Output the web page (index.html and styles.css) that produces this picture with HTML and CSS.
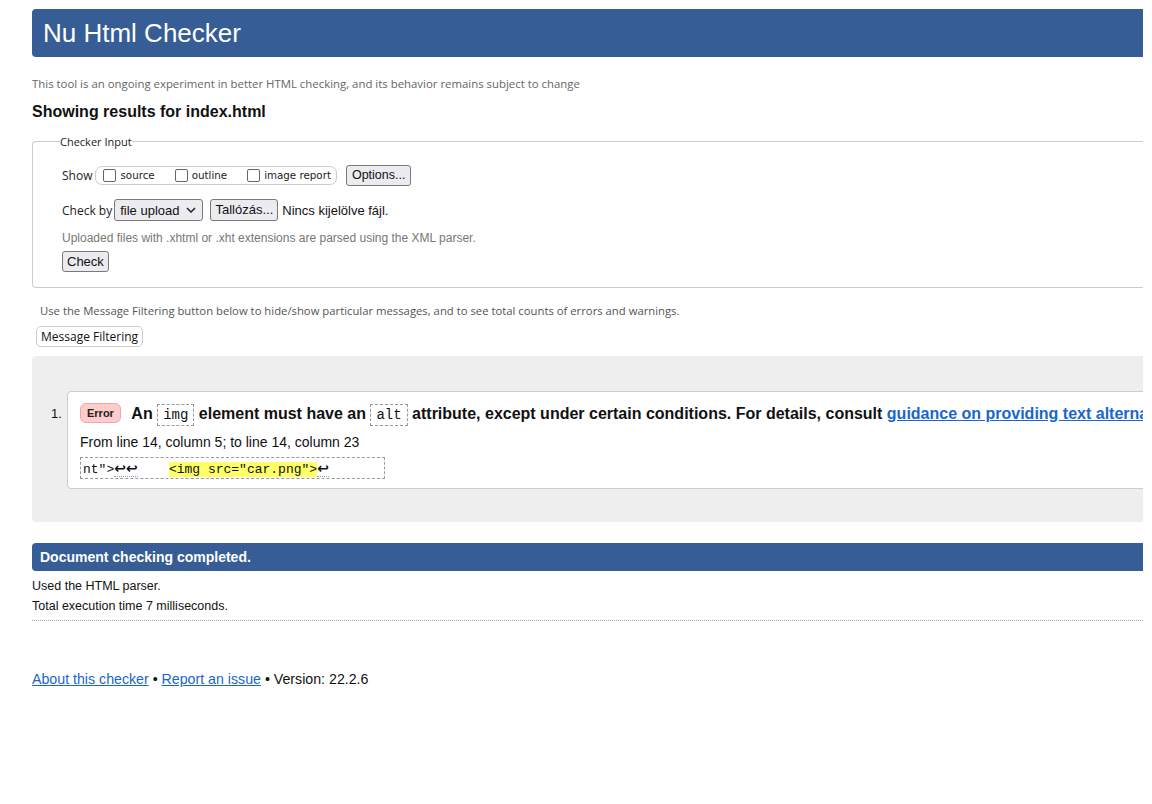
FILE: index.html
```html
<!DOCTYPE html>
<html lang="en">
<head>
<meta charset="utf-8">
<title>Showing results for index.html - Nu Html Checker</title>
<link rel="stylesheet" href="styles.css">
</head>
<body>
<div class="page">
  <h1 class="masthead">Nu Html Checker</h1>
  <p class="notice">This tool is an ongoing experiment in better HTML checking, and its behavior remains subject to change</p>
  <h2 class="results-title">Showing results for index.html</h2>

  <fieldset class="checker-input">
    <legend>Checker Input</legend>
    <div class="row show-row">
      <span class="lbl">Show</span>
      <span class="show-box">
        <label class="cb"><span class="box"></span>source</label>
        <label class="cb"><span class="box"></span>outline</label>
        <label class="cb"><span class="box"></span>image report</label>
      </span>
      <span class="btn">Options...</span>
    </div>
    <div class="row check-row">
      <span class="lbl">Check by</span>
      <span class="select">file upload
        <svg class="chev" width="10" height="6" viewBox="0 0 10 6"><path d="M1 1l4 4 4-4" fill="none" stroke="#222" stroke-width="1.5"/></svg>
      </span>
      <span class="btn">Tallózás...</span>
      <span class="nofile">Nincs kijelölve fájl.</span>
    </div>
    <p class="upload-note">Uploaded files with .xhtml or .xht extensions are parsed using the XML parser.</p>
    <span class="btn check-btn">Check</span>
  </fieldset>

  <p class="filter-note">Use the Message Filtering button below to hide/show particular messages, and to see total counts of errors and warnings.</p>
  <span class="filter-btn">Message Filtering</span>

  <div class="results">
    <ol class="messages">
      <li class="msg">
        <div class="msg-box">
          <p class="msg-text"><span class="badge">Error</span> <strong>An <code>img</code> element must have an <code>alt</code> attribute, except under certain conditions. For details, consult <a href="#">guidance on providing text alternatives for images</a>.</strong></p>
          <p class="location">From line 14, column 5; to line 14, column 23</p>
          <p class="extract"><code>nt"&gt;<span class="ret">↩↩</span>    <mark>&lt;img src="car.png"&gt;</mark><span class="ret">↩</span></code></p>
        </div>
      </li>
    </ol>
  </div>

  <h2 class="done">Document checking completed.</h2>
  <p class="details">Used the HTML parser.</p>
  <p class="details">Total execution time 7 milliseconds.</p>
  <hr class="sep">

  <p class="footer"><a href="#">About this checker</a> • <a href="#">Report an issue</a> • Version: 22.2.6</p>
</div>
</body>
</html>
```
FILE: styles.css
```css
html, body {
  margin: 0;
  padding: 0;
  background: #fff;
}
body {
  padding: 9px 9px 0 32px;
  font-family: "Liberation Sans", Arial, sans-serif;
  color: #111;
  overflow: hidden;
}
.page {
  width: 1111px;
  overflow: hidden;
}
.masthead {
  margin: 0;
  height: 48px;
  box-sizing: border-box;
  background: #365d95;
  color: #fff;
  font-weight: normal;
  font-size: 26px;
  line-height: 48px;
  padding-left: 11px;
  border-radius: 4px 0 0 4px;
}
.notice {
  margin: 19px 0 0;
  font-family: "Open Sans", sans-serif;
  font-size: 11.4px;
  line-height: 16px;
  color: #666;
}
.results-title {
  margin: 10px 0 0;
  font-size: 16px;
  line-height: 20px;
  font-weight: bold;
  color: #111;
}
.checker-input {
  margin: 12px 0 0;
  padding: 15px 0 15px 29px;
  border: 1px solid #ccc;
  border-right: none;
  border-radius: 4px 0 0 4px;
  min-width: 0;
}
.checker-input legend {
  font-family: "Open Sans", sans-serif;
  font-size: 11px;
  padding: 0;
  margin-left: -2px;
  color: #222;
}
.row {
  display: flex;
  align-items: center;
}
.lbl {
  font-family: "Open Sans", sans-serif;
  font-size: 12px;
  color: #222;
}
.show-row {
  height: 22px;
}
.show-box {
  display: inline-flex;
  align-items: center;
  height: 19px;
  margin-left: 3px;
  padding: 0 5px 0 7px;
  border: 1px solid #ccc;
  border-radius: 7px;
  box-sizing: border-box;
}
.cb {
  display: inline-flex;
  align-items: center;
  font-family: "DejaVu Sans", Verdana, sans-serif;
  font-size: 10.3px;
  color: #222;
  margin-right: 20px;
}
.cb:last-child { margin-right: 0; }
.box {
  width: 13px;
  height: 13px;
  border: 1px solid #666;
  border-radius: 2px;
  box-sizing: border-box;
  margin-right: 4px;
}
.btn {
  display: inline-block;
  font-family: "Liberation Sans", Arial, sans-serif;
  font-size: 12.5px;
  line-height: 19px;
  padding: 0 5px;
  background: #ebebf0;
  border: 1px solid #7a7a7a;
  border-radius: 3px;
  color: #111;
}
.show-row .btn { margin-left: 9px; }
.check-row {
  margin-top: 13px;
  height: 22px;
}
.select {
  display: inline-flex;
  align-items: center;
  margin-left: 2px;
  height: 22px;
  box-sizing: border-box;
  padding: 0 6px 0 5px;
  font-size: 13px;
  background: #ebebf0;
  border: 1px solid #7a7a7a;
  border-radius: 3px;
}
.chev { margin-left: 7px; }
.check-row .btn {
  margin-left: 7px;
  font-size: 13px;
  line-height: 20px;
  padding: 0 4px;
}
.nofile {
  margin-left: 4px;
  font-size: 13px;
}
.upload-note {
  margin: 10px 0 0;
  font-size: 12px;
  line-height: 14px;
  color: #777;
}
.check-btn {
  margin-top: 6px;
  font-size: 13px;
  line-height: 19px;
  padding: 0 4px;
}
.filter-note {
  margin: 16px 0 0 8px;
  font-family: "Open Sans", sans-serif;
  font-size: 11.3px;
  line-height: 14px;
  color: #555;
}
.filter-btn {
  display: inline-block;
  margin: 8px 0 0 4px;
  font-family: "Open Sans", sans-serif;
  font-size: 12px;
  line-height: 19px;
  padding: 0 4px;
  background: #fff;
  border: 1px solid #ccc;
  border-radius: 5px;
  color: #111;
}
.results {
  margin-top: 9px;
  background: #eee;
  border-radius: 4px 0 0 4px;
  padding: 35px 0 33px 0;
}
.messages {
  margin: 0;
  padding: 0 0 0 35px;
  list-style: none;
}
.msg {
  display: flex;
}
.msg::before {
  content: "1.";
  font-size: 13px;
  width: 16px;
  margin-left: -16px;
  padding-top: 15px;
  flex: none;
}
.msg-box {
  flex: none;
  width: 1300px;
  background: #fff;
  border: 1px solid #ccc;
  border-radius: 4px;
  padding: 10px 12px 9px 12px;
  white-space: nowrap;
}
.msg-text {
  margin: 0;
  font-size: 16px;
  line-height: 24px;
  font-weight: bold;
}
.badge {
  display: inline-block;
  font-size: 11px;
  line-height: 18px;
  padding: 0 6px;
  background: #fcc;
  border: 1px solid #e8aaaa;
  border-radius: 6px;
  margin-right: 6px;
  vertical-align: 2px;
  color: #222;
}
.msg-text code {
  font-family: "Liberation Mono", "Courier New", monospace;
  font-weight: normal;
  font-size: 14px;
  border: 1px dashed #999;
  padding: 2px 5px;
}
.msg-text a {
  color: #1a66cc;
}
.location {
  margin: 6px 0 0;
  font-size: 14px;
  line-height: 18px;
}
.extract {
  margin: 6px 0 0;
  display: block;
  width: fit-content;
  border: 1px dashed #999;
  padding: 2px 55px 2px 2px;
  font-size: 13px;
  line-height: 18px;
  height: 22px;
  box-sizing: border-box;
  overflow: hidden;
}
.extract code {
  font-family: "Liberation Mono", "Courier New", monospace;
  white-space: pre;
  line-height: 16px;
}
.ret {
  font-family: "DejaVu Sans", sans-serif;
  font-size: 14px;
  line-height: 14px;
  font-weight: bold;
  border-bottom: 1px dotted #999;
}
.extract mark {
  background: #ff6;
  color: #111;
}
.done {
  margin: 21px 0 0;
  height: 28px;
  line-height: 28px;
  background: #365d95;
  color: #fff;
  font-size: 14px;
  font-weight: bold;
  padding-left: 8px;
  border-radius: 4px 0 0 4px;
}
.details {
  margin: 8px 0 0;
  font-size: 12.5px;
  line-height: 14px;
}
.details + .details { margin-top: 6px; }
.sep {
  margin: 7px 0 0;
  border: none;
  border-top: 1px dotted #aaa;
  height: 0;
}
.footer {
  margin: 49px 0 0;
  font-size: 14.2px;
  line-height: 18px;
}
.footer a {
  color: #1a66cc;
}
```
